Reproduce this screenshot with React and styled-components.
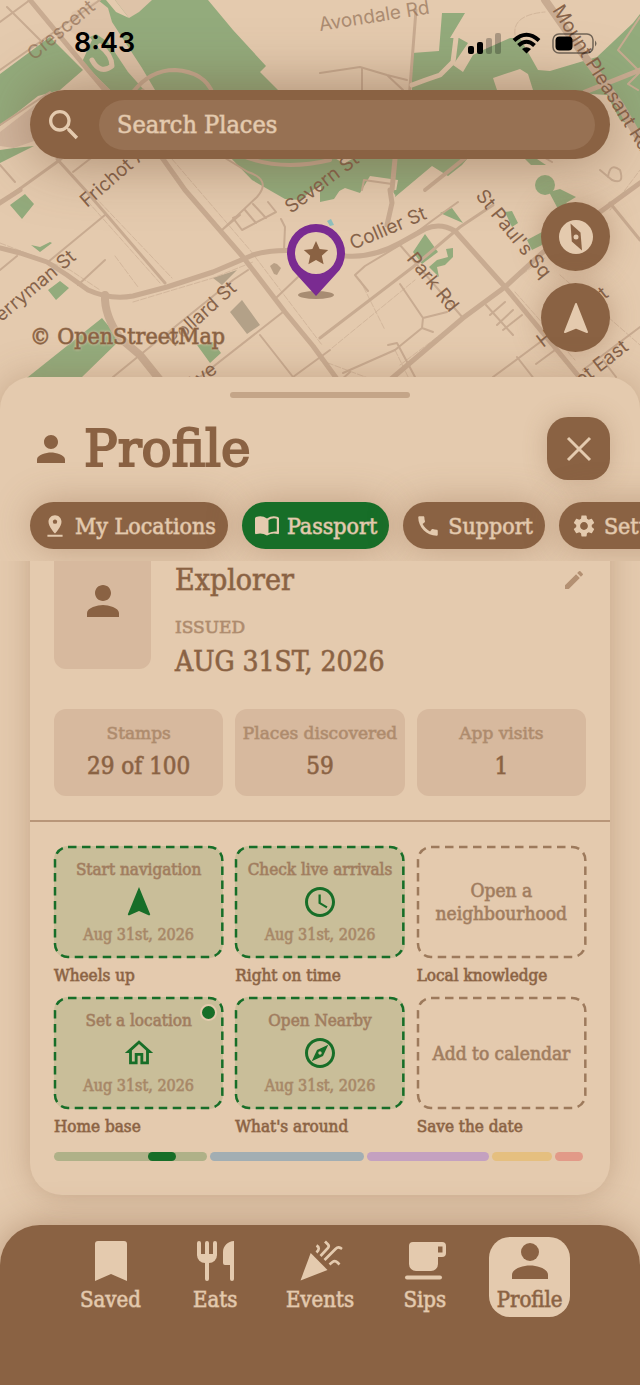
import React from 'react'
import styled, { createGlobalStyle, css } from 'styled-components'
import {
  MdAccessTime,
  MdCall,
  MdEdit,
  MdNavigation,
  MdOutlineExplore,
  MdOutlineHome,
  MdPerson,
  MdPinDrop,
  MdSearch,
  MdSettings,
} from 'react-icons/md'

const sand = '#e4caae'
const brown = '#8a6243'
const green = '#176e28'
const serif = "'DejaVu Serif Condensed', 'DejaVu Serif', serif"
const serifWide = "'DejaVu Serif', serif"

// the serif has no medium weight, a soft outline gives it one
const mediumWeight = css`
  -webkit-text-stroke: 1px color-mix(in srgb, currentColor 65%, transparent);
`

const GlobalStyle = createGlobalStyle`
  *, *::before, *::after { box-sizing: border-box; }
  body {
    margin: 0;
    background: ${sand};
    color: ${brown};
    font-family: ${serif};
  }
  button, input { font: inherit; color: inherit; border: 0; margin: 0; }
  a { color: inherit; text-decoration: none; }
  h1, h2, p, dl, dd, dt, ul, figure { margin: 0; padding: 0; }
  ul { list-style: none; }
`

const Page = styled.div`
  display: flex;
  flex-direction: column;
  min-height: 100vh;
  overflow: hidden;
`

/* Map */

const MapSection = styled.header`
  position: relative;
  padding: 0 30px 57px;
`

const MapArt = styled.svg`
  position: absolute;
  inset: 0;
  width: 100%;
  height: 100%;
`

const MapContent = styled.div`
  position: relative;
`

const StatusBar = styled.div`
  display: flex;
  align-items: center;
  justify-content: space-between;
  height: 90px;
  padding: 0 12px 4px 44px;
  color: #000;
  font: 600 27px/32px Inter, sans-serif;
`

const SearchBar = styled.form`
  display: flex;
  align-items: center;
  gap: 15px;
  height: 69px;
  padding: 0 15px 0 14px;
  border-radius: 35px;
  background: ${brown};
  color: ${sand};
  box-shadow: 0 0 60px rgba(110, 75, 50, 0.55);
`

const SearchInput = styled.input`
  flex: 1;
  min-width: 0;
  height: 50px;
  padding: 0 18px;
  border-radius: 25px;
  background: #977153;
  font-size: 25px;
  ${mediumWeight}
  &::placeholder { color: ${sand}; opacity: 1; }
`

const MapFooter = styled.div`
  display: flex;
  align-items: flex-end;
  justify-content: space-between;
  margin-top: 43px;
`

const Attribution = styled.a`
  font-size: 23px;
  line-height: 32px;
  text-shadow: 0 0 3px ${sand}, 0 0 3px ${sand};
  ${mediumWeight}
`

const MapControls = styled.div`
  display: flex;
  flex-direction: column;
  gap: 12px;
`

const RoundButton = styled.button`
  display: grid;
  place-items: center;
  width: 69px;
  height: 69px;
  padding: 0;
  border-radius: 50%;
  background: ${brown};
  color: ${sand};
  box-shadow: 0 0 30px rgba(137, 96, 66, 0.4);
`

/* Sheet */

const Sheet = styled.main`
  position: relative;
  display: flex;
  flex-direction: column;
  flex: 1;
  margin-top: -32px;
  border-radius: 32px 32px 0 0;
  background: ${sand};
  box-shadow: 0 0 36px rgba(137, 96, 66, 0.35);
`

const Handle = styled.div`
  width: 180px;
  height: 6px;
  margin: 15px auto 19px;
  border-radius: 3px;
  background: #c4a588;
`

const SheetHeader = styled.div`
  display: flex;
  align-items: center;
  justify-content: space-between;
  padding: 0 30px;
`

const Title = styled.h1`
  display: flex;
  align-items: center;
  gap: 12px;
  font: 400 50px/60px ${serifWide};
  -webkit-text-stroke: 2px currentColor;
`

const CloseButton = styled.button`
  display: grid;
  place-items: center;
  width: 63px;
  height: 63px;
  padding: 0;
  border-radius: 21px;
  background: ${brown};
  color: ${sand};
  box-shadow: 0 0 24px rgba(137, 96, 66, 0.3);
`

const Tabs = styled.nav`
  display: flex;
  gap: 14px;
  padding: 22px 0 12px 30px;
  overflow-x: clip;
`

const Tab = styled.button`
  display: flex;
  flex: none;
  align-items: center;
  gap: 7px;
  height: 47px;
  padding: 0 12px;
  border-radius: 24px;
  background: ${({ $active }) => ($active ? green : brown)};
  color: ${sand};
  font-size: 23px;
  white-space: nowrap;
  box-shadow: 0 0 36px rgba(137, 96, 66, 0.4);
  ${mediumWeight}
`

const Scroller = styled.div`
  flex: 1;
  padding: 0 30px 70px;
  background: ${sand};
  overflow: hidden;
`

const Card = styled.section`
  margin-top: -52px;
  border-radius: 32px;
  background: ${sand};
  box-shadow: 0 0 30px rgba(137, 96, 66, 0.35);
`

const CardTop = styled.div`
  padding: 24px;
  border-bottom: 2px solid #b89679;
`

const Identity = styled.div`
  display: flex;
  align-items: flex-end;
  gap: 24px;
  margin-bottom: 27px;
`

const Avatar = styled.div`
  display: grid;
  place-items: center;
  width: 97px;
  height: 136px;
  margin-bottom: 13px;
  border-radius: 12px;
  background: #d7b99e;
`

const Details = styled.dl`
  flex: 1;
`

const NameRow = styled.dd`
  display: flex;
  align-items: center;
  justify-content: space-between;
  margin-bottom: 15px;
  font-size: 30px;
  line-height: 40px;
  ${mediumWeight}
`

const EditButton = styled.button`
  display: grid;
  padding: 0;
  background: none;
  color: #b39072;
`

const Label = styled.dt`
  color: #ae8b6d;
  font: 400 17px/24px ${serifWide};
  white-space: nowrap;
  ${mediumWeight}
`

const IssueDate = styled.dd`
  padding-top: 3px;
  font-size: 28px;
  line-height: 40px;
  ${mediumWeight}
`

const Stats = styled.dl`
  display: grid;
  grid-template-columns: repeat(3, minmax(0, 1fr));
  gap: 12px;
`

const Stat = styled.div`
  display: flex;
  flex-direction: column;
  align-items: center;
  padding: 12px 0 9px;
  border-radius: 12px;
  background: #d7b99e;
`

const StatValue = styled.dd`
  font-size: 24px;
  line-height: 42px;
  ${mediumWeight}
`

const Stamps = styled.div`
  padding: 24px 24px 34px;
`

const StampGrid = styled.ul`
  display: grid;
  grid-template-columns: repeat(3, minmax(0, 1fr));
  gap: 10px 12px;
`

const StampBox = styled.div`
  position: relative;
  display: flex;
  flex-direction: column;
  align-items: center;
  justify-content: center;
  height: 112px;
  border-radius: 14px;
  text-align: center;
  color: #a07c5e;
  ${({ $earned }) => $earned && css`background: #c9be99;`}
`

const StampOutline = styled.svg`
  position: absolute;
  inset: 0;
  width: 100%;
  height: 100%;
  overflow: visible;
  color: ${({ $earned }) => ($earned ? green : '#9d7a5c')};
`

const StampAction = styled.p`
  font-size: 17px;
  line-height: 24px;
  white-space: nowrap;
  ${mediumWeight}
`

const StampHint = styled.p`
  font-size: 19px;
  line-height: 23px;
  ${mediumWeight}
`

const StampIcon = styled.div`
  display: grid;
  place-items: center;
  height: 42px;
  color: ${green};
`

const StampDate = styled.p`
  color: #a78767;
  font-size: 16px;
  line-height: 24px;
  ${mediumWeight}
`

const StampName = styled.p`
  padding-top: 5px;
  font-size: 17px;
  line-height: 24px;
  ${mediumWeight}
`

const NewDot = styled.span`
  position: absolute;
  top: 7px;
  right: 6px;
  width: 17px;
  height: 17px;
  border: 2px solid ${sand};
  border-radius: 50%;
  background: ${green};
`

const Pager = styled.div`
  display: grid;
  grid-template-columns: repeat(17, 1fr);
  gap: 3px;
  margin: 14px 3px 0 0;
`

const PagerPart = styled.span`
  grid-row: 1;
  grid-column: ${({ $from, $to }) => `${$from} / ${$to}`};
  height: 9px;
  border-radius: 5px;
  background: ${({ $color }) => $color};
`

/* Bottom navigation */

const NavBar = styled.nav`
  position: relative;
  display: grid;
  grid-template-columns: repeat(5, minmax(0, 1fr));
  justify-items: center;
  margin-top: -40px;
  padding: 12px 58px 68px;
  border-radius: 40px 40px 0 0;
  background: ${brown};
  color: ${sand};
  box-shadow: 0 0 36px rgba(137, 96, 66, 0.5);
`

const NavItem = styled.a`
  display: flex;
  flex-direction: column;
  align-items: center;
  width: 81px;
  height: 80px;
  border-radius: 21px;
  font-size: 22px;
  line-height: 30px;
  ${mediumWeight}
  ${({ $active }) => $active && css`
    background: ${sand};
    color: ${brown};
  `}
`

const Greens = styled.g`
  fill: #93ab7c;
`

const Roads = styled.g`
  fill: none;
  stroke: #c8ab91;
  stroke-linecap: round;
  stroke-linejoin: round;
`

const StreetNames = styled.g`
  fill: #86634a;
  font: 400 19px Inter, sans-serif;
`

const streets = [
  { name: 'Crescent', x: 34, y: 61, angle: -40, faded: true },
  { name: 'Avondale Rd', x: 320, y: 31, angle: -9, faded: true },
  { name: 'Mount Pleasant Rd', x: 552, y: 10, angle: 58 },
  { name: 'Frichot Ave', x: 87, y: 208, angle: -41 },
  { name: 'Severn St', x: 291, y: 214, angle: -37 },
  { name: 'Collier St', x: 353, y: 250, angle: -23 },
  { name: "St Paul's Sq", x: 475, y: 196, angle: 51 },
  { name: 'Park Rd', x: 406, y: 259, angle: 51 },
  { name: 'Perryman St', x: -8, y: 330, angle: -40 },
  { name: 'Pollard St', x: 174, y: 347, angle: -42 },
  { name: 'Ave', x: 192, y: 392, angle: -38 },
  { name: 'Hunter St', x: 543, y: 348, angle: -38 },
  { name: 'Street East', x: 553, y: 409, angle: -38 },
]

const MapBackdrop = () => (
  <MapArt viewBox='0 0 640 409' preserveAspectRatio='xMidYMid slice' aria-hidden='true'>
    <rect width='640' height='409' fill={sand} />
    <Greens>
      <path d='M98 0H106L116 12L129 18L115 0H152L129 18L115 0L208 0L233 30L266 66L260 72L278 90V110H125L112 92L82 62L92 40L75 20Z' />
      <path d='M50 37L83 70L60 90L38 96L0 126V74Z' />
      <path d='M0 150L14 148L34 146L0 163Z' />
      <path d='M228 155H330L346 165L300 200L285 199L252 180Z' />
      <path d='M352 159H467L462 165L448 176L432 166L395 197L398 180L370 176L360 193L345 188L322 200L320 178Z' />
      <path d='M442 13H465L450 38L459 38L468 43L453 65L463 72L473 55L483 50L510 38L520 38L538 70L550 71L597 57L633 23L640 14V130L620 120L607 95L533 90L528 74L520 69L493 78L497 90H412V53L439 51Z' />
      <path d='M525 159H537L546 165H531Z' />
      <circle cx='545' cy='185' r='10' />
      <path d='M549 192L560 189L576 197L566 203L573 208L558 209Z' />
      <path d='M440 213L452 208L463 223ZM425 234L438 252L422 264L413 252ZM429 267L437 260L448 257L446 249L453 248L453 257L445 265L437 267L439 277ZM505 212L512 211L518 223L512 227ZM527 240L542 232V245L532 250ZM320 190H340L334 199L320 202ZM392 190H401L395 195Z' />
      <path d='M10 205L25 194L34 204L22 219ZM31 245L40 247L50 242L52 243L40 252ZM48 290L60 281L69 288L56 300ZM28 377L102 318L120 340L82 377L60 396H8ZM197 345L213 342L221 353L210 363Z' />
    </Greens>
    <path d='M115 0H152L139 12L129 18Z' fill='#dec3a8' />
    <path d='M230 312L242 300L260 325L247 334ZM213 278L237 270L222 285Z' fill='#b3a188' />
    <path d='M270 266l4-3 3 1 4 4-4 7-3-1z' fill='#b9a085' />
    <path d='M327 221l4-2 3 6-4 1z' fill='#8fc0bd' />
    <path d='M72 12L98 0L108 8L112 22L142 68L155 90H144L128 72L108 42L96 34L84 40L68 30Z' fill='#dec3a8' />
    <path d='M0 132L44 98H90L60 132L14 148L0 146Z' fill='#d2b69e' />
    <Roads strokeWidth='5'>
      <path d='M0 248L20 253L47 262L67 275L88 290Q110 300 133 296L167 287L213 272L253 255Q275 248 310 252L346 256Q373 258 400 243L425 229Q440 222 455 231L505 287L590 390' />
      <path d='M105 295Q104 315 120 338L140 355L160 380' strokeWidth='8' />
      <path d='M30 0L88 70L163 159L185 190L243 257L285 312L313 346L345 390' />
      <path d='M57 159L87 192L165 283' strokeWidth='3' />
      <path d='M0 203L57 162L143 90' strokeWidth='3' />
      <path d='M384 385L463 318L505 287L542 253L607 207L640 183' />
      <path d='M-2 204L20 190' />
      <path d='M390 190L392 203L387 225M395 159L392 190' />
      <path d='M545 0L580 50L620 105L640 140' strokeWidth='8' />
      <path d='M585 92L640 70' />
      <path d='M416 10L409 100' strokeWidth='3' />
      <path d='M133 92Q150 70 175 70Q205 72 213 94' strokeWidth='4' />
      <path d='M240 155Q280 172 330 160' strokeWidth='4' />
      <path d='M453 62L440 75Q425 80 412 85M453 62L456 38' stroke={sand} />
      <path d='M92 60Q100 75 112 66Q112 55 100 46' stroke='#dec3a8' />
    </Roads>
    <Roads strokeWidth='2'>
      <path d='M0 70L57 30L100 0M7 7L40 40M0 22L30 0M0 125L50 92M80 62L140 120' />
      <path d='M320 73L360 67L387 75L407 80M362 68L362 90M387 75L403 90' />
      <path d='M640 17L618 50L640 72M640 72L628 84L638 90' />
      <path d='M73 172L95 155M0 165L15 182M48 262L105 215M0 270L17 256M78 285L105 260' />
      <path d='M113 377L140 355L233 280L248 270M200 377L283 312M260 335L293 377L330 350M277 297L298 277' />
      <path d='M222 230L257 197Q272 180 248 172L225 158M222 230L240 215L233 218L242 230L276 212L268 202M245 210L256 223M253 204L266 218' />
      <path d='M281 219L285 227L284 250' />
      <path d='M320 338L413 267L460 227L493 205' strokeWidth='3' />
      <path d='M400 245L463 318M400 245L433 220L458 202M355 275L365 266L400 245M355 275L368 291' />
      <path d='M400 284L423 318L422 328L395 350L343 373M423 318L447 312M388 345L397 343L415 377M422 328L433 332' />
      <path d='M610 203L640 240' strokeWidth='3' />
      <path d='M486 305L513 335M490 315L505 302M497 325L513 310M503 330L522 315' />
      <path d='M493 377L547 337M517 357L535 380M583 370L640 327M536 364L555 350M603 360L616 377' />
      <path d='M320 355L338 380M350 372L330 390' />
      <path d='M600 170L612 180Q625 185 620 170Q610 162 608 177' />
      <path d='M540 155L552 162M362 190L364 180L392 184' />
      <path d='M425 190L465 158' strokeWidth='4' />
    </Roads>
    <Roads strokeWidth='1' strokeDasharray='6 2' opacity='0.6'>
      <path d='M172 159L250 250L322 345M82 195L160 283M0 243L70 270L100 290M133 302L213 278L253 262M94 196L172 278' />
      <path d='M332 348L415 280M400 365L500 290L545 258M500 280L450 228M515 292L575 360M560 275L640 345' />
      <path d='M115 256L138 287M360 280L385 330M610 210L640 170M515 35Q512 15 545 12' />
      <path d='M320 360L400 390M395 350L412 385' />
    </Roads>
    <StreetNames>
      {streets.map(({ name, x, y, angle, faded }) => (
        <text key={name} transform={`translate(${x} ${y}) rotate(${angle})`} opacity={faded ? 0.6 : 1}>
          {name}
        </text>
      ))}
    </StreetNames>
    <ellipse cx='316' cy='295' rx='18' ry='4' fill='#a78c72' />
    <path d='M316 296L296 274A29 29 0 1 1 336 274Z' fill='#7a2b91' />
    <circle cx='316' cy='253' r='21' fill={sand} />
    <path d='M316 241l3.600 8 8.600.9-6.400 5.800 1.800 8.500-7.600-4.300-7.600 4.300 1.800-8.500-6.400-5.800 8.600-.9z' fill={brown} />
  </MapArt>
)

const StatusIcons = () => (
  <svg width='130' height='24' viewBox='0 0 130 24' aria-hidden='true'>
    <rect x='0' y='15' width='6' height='8' rx='2' />
    <rect x='9' y='11' width='6' height='12' rx='2' />
    <rect x='18' y='7' width='6' height='16' rx='2' opacity='0.25' />
    <rect x='27' y='2' width='6' height='21' rx='2' opacity='0.25' />
    <g fill='none' stroke='#000' strokeWidth='4'>
      <path d='M46 9.500Q58.500-2 71 9.500' />
      <path d='M50.500 14.500Q58.500 7 66.500 14.500' />
    </g>
    <path d='M58.500 22.500L54 18Q58.500 14.500 63 18Z' />
    <rect x='85' y='3' width='40' height='19' rx='6' fill='none' stroke='#000' strokeOpacity='0.5' strokeWidth='1.500' />
    <rect x='87.500' y='5.500' width='17' height='14' rx='4' />
    <path d='M127 9.500q3 3 0 6z' opacity='0.5' />
  </svg>
)

const CompassIcon = () => (
  <svg width='34' height='34' viewBox='0 0 34 34' aria-hidden='true'>
    <circle cx='17' cy='17' r='17' fill='currentColor' />
    <path d='M11.500 3.500L21.500 12.500L23 30.500L12.800 21.500Z' fill={brown} />
    <circle cx='17' cy='17' r='2.500' fill='currentColor' />
  </svg>
)

const LocateIcon = () => (
  <svg width='26' height='32' viewBox='0 0 26 32' aria-hidden='true'>
    <path d='M13 2L24 30L13 25.500L2 30Z' fill='currentColor' stroke='currentColor' strokeWidth='2' strokeLinejoin='round' />
  </svg>
)

const CloseIcon = () => (
  <svg width='26' height='26' viewBox='0 0 26 26' aria-hidden='true'>
    <path d='M2 2L24 24M24 2L2 24' stroke='currentColor' strokeWidth='3' />
  </svg>
)

const BookIcon = () => (
  <svg width='26' height='20' viewBox='0 0 26 20' aria-hidden='true'>
    <path
      d='M13 2.500Q8-1 2 1Q1 1.500 1 2.500V17Q1 18.500 2.500 18Q8 16.500 13 19.500Q18 16.500 23.500 18Q25 18.500 25 17V2.500Q25 1.500 24 1Q18-1 13 2.500ZM14.500 4Q18.500 1.500 22.800 2.700V15.500Q18.500 15 14.500 17Z'
      fill='currentColor'
      fillRule='evenodd'
    />
  </svg>
)

const navIcons = {
  saved: <path d='M9 7a3 3 0 0 1 3-3h26a3 3 0 0 1 3 3v37l-16-7-16 7z' fill='currentColor' />,
  eats: (
    <>
      <path d='M8 6V17M16 6V42M24 6V17' fill='none' stroke='currentColor' strokeWidth='4' strokeLinecap='round' />
      <path d='M6 17H26V18a8 8 0 0 1-8 8H14a8 8 0 0 1-8-8z' fill='currentColor' />
      <path d='M43 4c-6 0-11 5-11 11v11a2 2 0 0 0 2 2h5v14a2 2 0 0 0 4 0z' fill='currentColor' />
    </>
  ),
  events: (
    <>
      <path d='M4.500 43.500L14.700 16L31.500 33Z' fill='currentColor' />
      <path
        d='M20.500 8.500Q25 11 20.500 15.500M29 4.500L32 7.500Q33.500 9 32 11L24.500 19M46 12L44.500 11Q42 9.500 39.500 12L28.500 23M43.500 27.500L41.500 25.500Q39 23 36.500 25L33.500 27.500'
        fill='none'
        stroke='currentColor'
        strokeWidth='2.700'
      />
    </>
  ),
  sips: (
    <>
      <path
        d='M12 5H41a4 4 0 0 1 4 4v7a4 4 0 0 1-4 4H37v7a7 7 0 0 1-7 7H15a7 7 0 0 1-7-7V9a4 4 0 0 1 4-4ZM37 9.500V15.500H41.500V9.500Z'
        fill='currentColor'
        fillRule='evenodd'
      />
      <path d='M6 40.500H39' stroke='currentColor' strokeWidth='4' strokeLinecap='round' />
    </>
  ),
  profile: (
    <>
      <circle cx='24' cy='15' r='9' fill='currentColor' />
      <path d='M6 42V38C6 32 16 28.500 24 28.500S42 32 42 38V42Z' fill='currentColor' />
    </>
  ),
}

const tabs = [
  { label: 'My Locations', icon: <MdPinDrop size={26} /> },
  { label: 'Passport', icon: <BookIcon />, active: true },
  { label: 'Support', icon: <MdCall size={26} /> },
  { label: 'Settings', icon: <MdSettings size={26} /> },
]

const stats = [
  { label: 'Stamps', value: '29 of 100' },
  { label: 'Places discovered', value: '59' },
  { label: 'App visits', value: '1' },
]

const stamps = [
  { action: 'Start navigation', name: 'Wheels up', icon: <MdNavigation size={36} />, date: 'Aug 31st, 2026' },
  { action: 'Check live arrivals', name: 'Right on time', icon: <MdAccessTime size={36} />, date: 'Aug 31st, 2026' },
  { action: 'Open a neighbourhood', name: 'Local knowledge' },
  { action: 'Set a location', name: 'Home base', icon: <MdOutlineHome size={34} />, date: 'Aug 31st, 2026', isNew: true },
  { action: 'Open Nearby', name: "What's around", icon: <MdOutlineExplore size={36} />, date: 'Aug 31st, 2026' },
  { action: 'Add to calendar', name: 'Save the date' },
]

const pagerParts = [
  { from: 1, to: 6, color: '#afb188' },
  { from: 6, to: 11, color: '#a2aeb3' },
  { from: 11, to: 15, color: '#c4a1c0' },
  { from: 15, to: 17, color: '#e5bf7f' },
  { from: 17, to: 18, color: '#e29a88' },
  { from: 4, to: 5, color: green },
]

const navItems = [
  { id: 'saved', label: 'Saved' },
  { id: 'eats', label: 'Eats' },
  { id: 'events', label: 'Events' },
  { id: 'sips', label: 'Sips' },
  { id: 'profile', label: 'Profile', active: true },
]

const Stamp = ({ action, name, icon, date, isNew }) => (
  <li>
    <StampBox $earned={!!date}>
      <StampOutline $earned={!!date} aria-hidden='true'>
        <rect
          x='1'
          y='1'
          rx='13'
          fill='none'
          stroke='currentColor'
          strokeWidth='2.500'
          strokeDasharray='8.500 5.500'
          style={{ width: 'calc(100% - 2px)', height: 'calc(100% - 2px)' }}
        />
      </StampOutline>
      {date ? (
        <>
          <StampAction>{action}</StampAction>
          <StampIcon>{icon}</StampIcon>
          <StampDate>{date}</StampDate>
        </>
      ) : (
        <StampHint>{action}</StampHint>
      )}
      {isNew && <NewDot />}
    </StampBox>
    <StampName>{name}</StampName>
  </li>
)

const App = () => {
  return (
    <>
      <GlobalStyle />
      <Page>
        <MapSection>
          <MapBackdrop />
          <MapContent>
            <StatusBar>
              <span>8:43</span>
              <StatusIcons />
            </StatusBar>
            <SearchBar role='search'>
              <MdSearch size={40} aria-hidden='true' />
              <SearchInput type='text' placeholder='Search Places' aria-label='Search Places' />
            </SearchBar>
            <MapFooter>
              <Attribution href='#copyright'>© OpenStreetMap</Attribution>
              <MapControls>
                <RoundButton type='button' aria-label='Compass'><CompassIcon /></RoundButton>
                <RoundButton type='button' aria-label='My position'><LocateIcon /></RoundButton>
              </MapControls>
            </MapFooter>
          </MapContent>
        </MapSection>

        <Sheet>
          <Handle />
          <SheetHeader>
            <Title>
              <MdPerson size={42} strokeWidth={0} aria-hidden='true' />
              Profile
            </Title>
            <CloseButton type='button' aria-label='Close'><CloseIcon /></CloseButton>
          </SheetHeader>
          <Tabs>
            {tabs.map(({ label, icon, active }) => (
              <Tab key={label} type='button' $active={active}>
                {icon}
                {label}
              </Tab>
            ))}
          </Tabs>

          <Scroller>
            <Card>
              <CardTop>
                <Identity>
                  <Avatar><MdPerson size={48} /></Avatar>
                  <Details>
                    <NameRow>
                      Explorer
                      <EditButton type='button' aria-label='Edit name'><MdEdit size={24} /></EditButton>
                    </NameRow>
                    <Label>ISSUED</Label>
                    <IssueDate>AUG 31ST, 2026</IssueDate>
                  </Details>
                </Identity>
                <Stats>
                  {stats.map(({ label, value }) => (
                    <Stat key={label}>
                      <Label>{label}</Label>
                      <StatValue>{value}</StatValue>
                    </Stat>
                  ))}
                </Stats>
              </CardTop>
              <Stamps>
                <StampGrid>
                  {stamps.map((stamp) => (
                    <Stamp key={stamp.name} {...stamp} />
                  ))}
                </StampGrid>
                <Pager>
                  {pagerParts.map(({ from, to, color }) => (
                    <PagerPart key={color} $from={from} $to={to} $color={color} />
                  ))}
                </Pager>
              </Stamps>
            </Card>
          </Scroller>
        </Sheet>

        <NavBar>
          {navItems.map(({ id, label, active }) => (
            <NavItem key={id} href={`#${id}`} $active={active}>
              <svg width='48' height='48' viewBox='0 0 48 48' aria-hidden='true'>{navIcons[id]}</svg>
              {label}
            </NavItem>
          ))}
        </NavBar>
      </Page>
    </>
  )
}

export default App
